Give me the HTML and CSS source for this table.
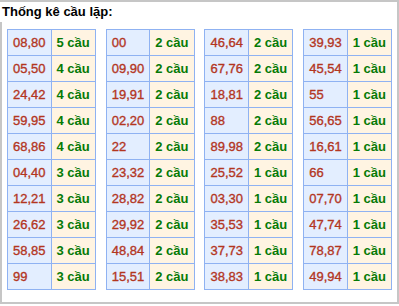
FILE: index.html
```html
<!DOCTYPE html>
<html lang="vi">
<head>
<meta charset="utf-8">
<title>Thống kê cầu lặp</title>
<link rel="stylesheet" href="styles.css">
</head>
<body>
<div class="panel">
  <div class="title">Thống kê cầu lặp:</div>
  <div class="grid">
    <table class="stat">
      <tr><td class="num">08,80</td><td class="cnt">5 cầu</td></tr>
      <tr><td class="num">05,50</td><td class="cnt">4 cầu</td></tr>
      <tr><td class="num">24,42</td><td class="cnt">4 cầu</td></tr>
      <tr><td class="num">59,95</td><td class="cnt">4 cầu</td></tr>
      <tr><td class="num">68,86</td><td class="cnt">4 cầu</td></tr>
      <tr><td class="num">04,40</td><td class="cnt">3 cầu</td></tr>
      <tr><td class="num">12,21</td><td class="cnt">3 cầu</td></tr>
      <tr><td class="num">26,62</td><td class="cnt">3 cầu</td></tr>
      <tr><td class="num">58,85</td><td class="cnt">3 cầu</td></tr>
      <tr><td class="num">99</td><td class="cnt">3 cầu</td></tr>
    </table>
    <table class="stat">
      <tr><td class="num">00</td><td class="cnt">2 cầu</td></tr>
      <tr><td class="num">09,90</td><td class="cnt">2 cầu</td></tr>
      <tr><td class="num">19,91</td><td class="cnt">2 cầu</td></tr>
      <tr><td class="num">02,20</td><td class="cnt">2 cầu</td></tr>
      <tr><td class="num">22</td><td class="cnt">2 cầu</td></tr>
      <tr><td class="num">23,32</td><td class="cnt">2 cầu</td></tr>
      <tr><td class="num">28,82</td><td class="cnt">2 cầu</td></tr>
      <tr><td class="num">29,92</td><td class="cnt">2 cầu</td></tr>
      <tr><td class="num">48,84</td><td class="cnt">2 cầu</td></tr>
      <tr><td class="num">15,51</td><td class="cnt">2 cầu</td></tr>
    </table>
    <table class="stat">
      <tr><td class="num">46,64</td><td class="cnt">2 cầu</td></tr>
      <tr><td class="num">67,76</td><td class="cnt">2 cầu</td></tr>
      <tr><td class="num">18,81</td><td class="cnt">2 cầu</td></tr>
      <tr><td class="num">88</td><td class="cnt">2 cầu</td></tr>
      <tr><td class="num">89,98</td><td class="cnt">2 cầu</td></tr>
      <tr><td class="num">25,52</td><td class="cnt">1 cầu</td></tr>
      <tr><td class="num">03,30</td><td class="cnt">1 cầu</td></tr>
      <tr><td class="num">35,53</td><td class="cnt">1 cầu</td></tr>
      <tr><td class="num">37,73</td><td class="cnt">1 cầu</td></tr>
      <tr><td class="num">38,83</td><td class="cnt">1 cầu</td></tr>
    </table>
    <table class="stat">
      <tr><td class="num">39,93</td><td class="cnt">1 cầu</td></tr>
      <tr><td class="num">45,54</td><td class="cnt">1 cầu</td></tr>
      <tr><td class="num">55</td><td class="cnt">1 cầu</td></tr>
      <tr><td class="num">56,65</td><td class="cnt">1 cầu</td></tr>
      <tr><td class="num">16,61</td><td class="cnt">1 cầu</td></tr>
      <tr><td class="num">66</td><td class="cnt">1 cầu</td></tr>
      <tr><td class="num">07,70</td><td class="cnt">1 cầu</td></tr>
      <tr><td class="num">47,74</td><td class="cnt">1 cầu</td></tr>
      <tr><td class="num">78,87</td><td class="cnt">1 cầu</td></tr>
      <tr><td class="num">49,94</td><td class="cnt">1 cầu</td></tr>
    </table>
  </div>
</div>
</body>
</html>
```

FILE: styles.css
```css
html, body {
  margin: 0;
  padding: 0;
  background: #fff;
}

body {
  font-family: "Liberation Sans", Arial, sans-serif;
}

.panel {
  box-sizing: border-box;
  width: 399px;
  height: 304px;
  border: 2px solid #c6c6c6;
}

.title {
  display: inline-block;
  margin: -2px 0 0 -2px;
  padding: 2px 12px 2px 2px;
  background: #fff;
  color: #000;
  font-weight: bold;
  font-size: 13px;
  line-height: 16px;
}

.grid {
  margin-top: 7px;
  display: grid;
  grid-template-columns: repeat(4, 1fr);
  justify-items: center;
}

.stat {
  border-collapse: collapse;
  border: 1px solid #8fb2f2;
}

.stat td {
  border: 1px solid #8fb2f2;
  padding: 5px 5px;
  font-size: 13px;
  line-height: 15px;
  text-align: left;
  white-space: nowrap;
}

.num {
  background: #e3eeff;
  color: #b3361f;
  -webkit-text-stroke: 0.35px #b3361f;
}

.cnt {
  background: #fff4e2;
  color: #067a06;
  font-weight: bold;
}
```
